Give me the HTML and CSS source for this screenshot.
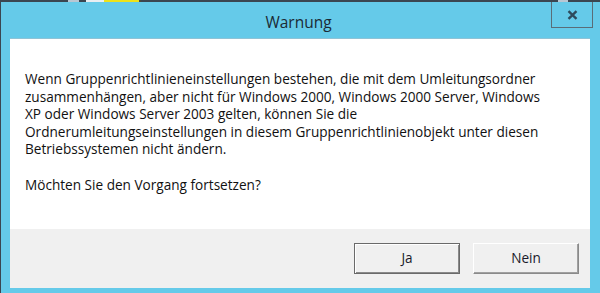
FILE: index.html
```html
<!DOCTYPE html>
<html lang="de">
<head>
    <meta charset="UTF-8">
    <meta name="viewport" content="width=device-width, initial-scale=1.0">
    <title>Warnung</title>
    <link rel="stylesheet" href="styles.css">
</head>
<body>

    <div class="behind">
        <span class="seg seg-dark1"></span>
        <span class="seg seg-grey"></span>
        <span class="seg seg-gap"></span>
        <span class="seg seg-white"></span>
        <span class="seg seg-yellow"></span>
        <span class="seg seg-dark2"></span>
        <span class="seg seg-grey2"></span>
    </div>

    <div class="window">
        <div class="titlebar">
            <span class="title">Warnung</span>
            <button class="close" title="Schließen">
                <svg width="11" height="10" viewBox="0 0 11 10">
                    <path d="M1.5 1.2 L9.5 8.8 M9.5 1.2 L1.5 8.8" stroke="#2d4b5c" stroke-width="2.4" fill="none"/>
                </svg>
            </button>
        </div>

        <div class="client">
            <div class="content">
                <p>Wenn Gruppenrichtlinieneinstellungen bestehen, die mit dem Umleitungsordner<br>
                zusammenhängen, aber nicht für Windows 2000, Windows 2000 Server, Windows<br>
                XP oder Windows Server 2003 gelten, können Sie die<br>
                Ordnerumleitungseinstellungen in diesem Gruppenrichtlinienobjekt unter diesen<br>
                Betriebssystemen nicht ändern.</p>
                <p class="question">Möchten Sie den Vorgang fortsetzen?</p>
            </div>
            <div class="footer">
                <button class="btn btn-default">Ja</button>
                <button class="btn">Nein</button>
            </div>
        </div>
    </div>

</body>
</html>
```

FILE: styles.css
```css
body {
    margin: 0;
    padding: 0 0 0 1px;
    overflow: hidden;
    background: #3b4651;
    font-family: 'Open Sans', 'Noto Sans', sans-serif;
}
/* Streifen des dahinterliegenden Fensters */
.behind {
    height: 2px;
    display: flex;
}
.seg {
    height: 2px;
}
.seg-dark1 { width: 67px; }
.seg-grey { width: 11px; background: #b9c7d3; }
.seg-gap { width: 7px; }
.seg-white { width: 18px; background: #e9eef2; }
.seg-yellow { width: 35px; background: #eee21a; border-right: 2px solid #4a4a3a; }
.seg-dark2 { width: 417px; }
.seg-grey2 { width: 10px; background: #b9c7d3; }

.window {
    background: #65cae9;
    padding: 0 10px 5px 9px;
}
.titlebar {
    position: relative;
    height: 36px;
    display: flex;
    align-items: center;
    justify-content: center;
}
.title {
    font-size: 15.5px;
    color: #1b2a35;
    padding: 4px 3px 0 0;
}
.close {
    position: absolute;
    top: 0;
    right: -3px;
    width: 42px;
    height: 26px;
    padding: 0;
    border: 1px solid #5a6d78;
    border-top: none;
    background: transparent;
    display: flex;
    align-items: center;
    justify-content: center;
}
.client {
    height: 250px;
    display: flex;
    flex-direction: column;
    border-top: 1px solid #8fc3d6;
    box-sizing: border-box;
}
.content {
    flex: 1;
    background: #ffffff;
    padding: 31px 0 0 15px;
    font-size: 13.6px;
    line-height: 17.6px;
    color: #111111;
    white-space: nowrap;
}
.content p {
    margin: 0;
}
.content .question {
    margin-top: 17.6px;
}
.footer {
    height: 59px;
    background: #f0f0f0;
    display: flex;
    align-items: center;
    justify-content: flex-end;
    gap: 13px;
    padding-right: 11px;
}
.btn {
    width: 106px;
    height: 31px;
    font-family: 'Open Sans', 'Noto Sans', sans-serif;
    font-size: 13.6px;
    color: #1a1a2a;
    background: #f0f0f0;
    border: 1px solid;
    border-color: #ffffff #8a8a8a #8a8a8a #ffffff;
    box-shadow: inset -1px -1px 0 #a0a0a0;
    padding: 0 0 2px 0;
}
.btn-default {
    border: 1px solid #6a6a6a;
    box-shadow: inset 1px 1px 0 #ffffff, inset -1px -1px 0 #8a8a8a;
}
```
